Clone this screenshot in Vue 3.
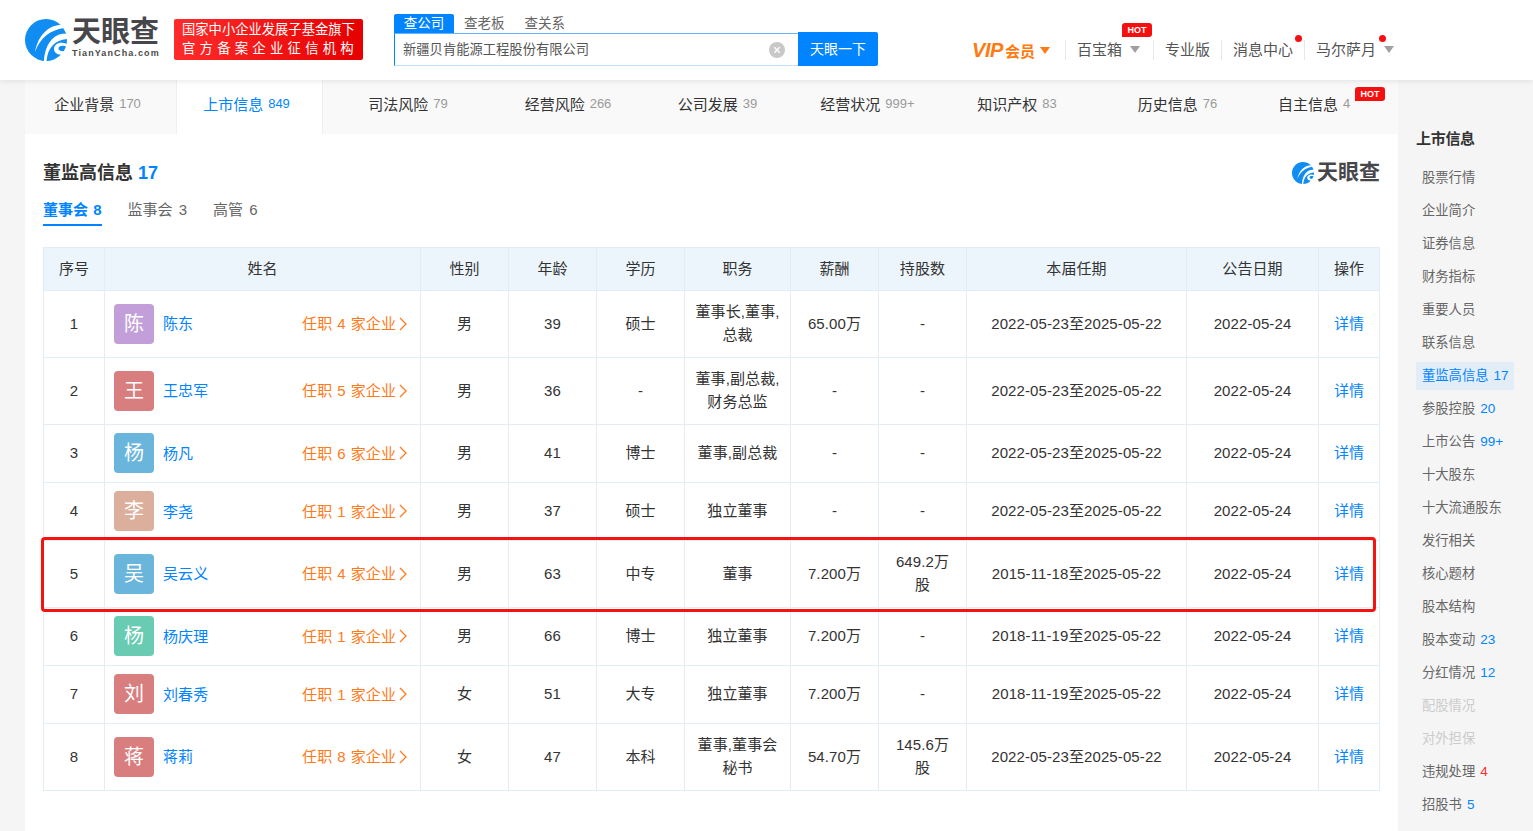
<script setup>
const mainTabs = [
  { name: '企业背景', count: '170' },
  { name: '上市信息', count: '849', active: true },
  { name: '司法风险', count: '79' },
  { name: '经营风险', count: '266' },
  { name: '公司发展', count: '39' },
  { name: '经营状况', count: '999+' },
  { name: '知识产权', count: '83' },
  { name: '历史信息', count: '76' },
  { name: '自主信息', count: '4', hot: true }
]

const people = [
  { no: 1, avatar: '陈', color: '#c39fd9', name: '陈东', jobs: 4, sex: '男', age: 39, edu: '硕士', post: ['董事长,董事,', '总裁'], pay: '65.00万', shares: ['-'], term: '2022-05-23至2025-05-22' },
  { no: 2, avatar: '王', color: '#d87e7e', name: '王忠军', jobs: 5, sex: '男', age: 36, edu: '-', post: ['董事,副总裁,', '财务总监'], pay: '-', shares: ['-'], term: '2022-05-23至2025-05-22' },
  { no: 3, avatar: '杨', color: '#69b5dc', name: '杨凡', jobs: 6, sex: '男', age: 41, edu: '博士', post: ['董事,副总裁'], pay: '-', shares: ['-'], term: '2022-05-23至2025-05-22' },
  { no: 4, avatar: '李', color: '#dcae9c', name: '李尧', jobs: 1, sex: '男', age: 37, edu: '硕士', post: ['独立董事'], pay: '-', shares: ['-'], term: '2022-05-23至2025-05-22' },
  { no: 5, avatar: '吴', color: '#69b5dc', name: '吴云义', jobs: 4, sex: '男', age: 63, edu: '中专', post: ['董事'], pay: '7.200万', shares: ['649.2万', '股'], term: '2015-11-18至2025-05-22' },
  { no: 6, avatar: '杨', color: '#69cbb2', name: '杨庆理', jobs: 1, sex: '男', age: 66, edu: '博士', post: ['独立董事'], pay: '7.200万', shares: ['-'], term: '2018-11-19至2025-05-22' },
  { no: 7, avatar: '刘', color: '#d87e7e', name: '刘春秀', jobs: 1, sex: '女', age: 51, edu: '大专', post: ['独立董事'], pay: '7.200万', shares: ['-'], term: '2018-11-19至2025-05-22' },
  { no: 8, avatar: '蒋', color: '#d87e7e', name: '蒋莉', jobs: 8, sex: '女', age: 47, edu: '本科', post: ['董事,董事会', '秘书'], pay: '54.70万', shares: ['145.6万', '股'], term: '2022-05-23至2025-05-22' }
]

const sideItems = [
  { name: '股票行情' },
  { name: '企业简介' },
  { name: '证券信息' },
  { name: '财务指标' },
  { name: '重要人员' },
  { name: '联系信息' },
  { name: '董监高信息', count: '17', active: true },
  { name: '参股控股', count: '20' },
  { name: '上市公告', count: '99+' },
  { name: '十大股东' },
  { name: '十大流通股东' },
  { name: '发行相关' },
  { name: '核心题材' },
  { name: '股本结构' },
  { name: '股本变动', count: '23' },
  { name: '分红情况', count: '12' },
  { name: '配股情况', off: true },
  { name: '对外担保', off: true },
  { name: '违规处理', count: '4', red: true },
  { name: '招股书', count: '5' }
]
</script>

<template>
  <div class="page">
    <header class="topbar">
      <div class="logo">
        <svg class="logo-mark" viewBox="0 0 42 42">
          <circle cx="21" cy="21" r="21" fill="#0f8df2" />
          <path d="M36 6C24 6 13 16 10 33 15 19 25 11 39 9z" fill="#fff" />
          <path d="M42 15C30 13 20 24 19 42h2.500C23 28 30 21 42 20z" fill="#fff" />
          <path d="M42 25c-7-3-13 0-13 5 0 4 5 7 10 5l1.500-3c-4 1-7-.5-7-2.500 0-2.500 4-3.500 8-2z" fill="#fff" />
        </svg>
        <div class="logo-text">
          <div class="logo-cn">天眼查</div>
          <div class="logo-en">TianYanCha.com</div>
        </div>
      </div>
      <div class="slogan">
        <div>国家中小企业发展子基金旗下</div>
        <div class="slogan-wide">官方备案企业征信机构</div>
      </div>
      <div class="search">
        <div class="search-tabs">
          <span class="search-tab on">查公司</span>
          <span class="search-tab">查老板</span>
          <span class="search-tab">查关系</span>
        </div>
        <div class="search-row">
          <div class="search-input">
            <span class="search-value">新疆贝肯能源工程股份有限公司</span>
            <svg class="search-clear" viewBox="0 0 16 16">
              <circle cx="8" cy="8" r="8" fill="#c8c8c8" />
              <path d="M5.300 5.300l5.400 5.400M10.700 5.300l-5.400 5.400" stroke="#fff" stroke-width="1.400" />
            </svg>
          </div>
          <div class="search-btn">天眼一下</div>
        </div>
      </div>
      <nav class="topnav">
        <div class="vip">
          <span class="vip-en">VIP</span><span class="vip-cn">会员</span>
          <i class="tri tri-orange"></i>
        </div>
        <div class="nav-item box">
          百宝箱<i class="tri"></i>
          <span class="hot hot-box">HOT</span>
        </div>
        <div class="nav-item pro">专业版</div>
        <div class="nav-item msg">消息中心<b class="dot"></b></div>
        <div class="nav-item user">马尔萨月<b class="dot"></b><i class="tri"></i></div>
      </nav>
    </header>

    <div class="body">
      <main class="content">
        <div class="main-tabs">
          <div v-for="tab in mainTabs" :key="tab.name" class="main-tab" :class="{ active: tab.active }">
            {{ tab.name }}<span class="main-count">{{ tab.count }}</span>
            <span v-if="tab.hot" class="hot hot-tab">HOT</span>
          </div>
        </div>

        <section class="panel">
          <div class="panel-head">
            <h2 class="panel-title">董监高信息 <span class="blue">17</span></h2>
            <div class="mini-logo">
              <svg class="mini-mark" viewBox="0 0 42 42">
                <circle cx="21" cy="21" r="21" fill="#0f8df2" />
                <path d="M36 6C24 6 13 16 10 33 15 19 25 11 39 9z" fill="#fff" />
                <path d="M42 15C30 13 20 24 19 42h2.500C23 28 30 21 42 20z" fill="#fff" />
                <path d="M42 25c-7-3-13 0-13 5 0 4 5 7 10 5l1.500-3c-4 1-7-.5-7-2.500 0-2.500 4-3.500 8-2z" fill="#fff" />
              </svg>
              <span class="mini-text">天眼查</span>
            </div>
          </div>
          <div class="sub-tabs">
            <span class="sub-tab on">董事会 8</span>
            <span class="sub-tab">监事会 3</span>
            <span class="sub-tab">高管 6</span>
          </div>

          <div class="table-wrap">
            <table class="staff">
              <colgroup>
                <col class="c-narrow" />
                <col class="c-name" />
                <col class="c-mid" />
                <col class="c-mid" />
                <col class="c-mid" />
                <col class="c-post" />
                <col class="c-mid" />
                <col class="c-mid" />
                <col class="c-term" />
                <col class="c-date" />
                <col class="c-narrow" />
              </colgroup>
              <thead>
                <tr>
                  <th>序号</th>
                  <th>姓名</th>
                  <th>性别</th>
                  <th>年龄</th>
                  <th>学历</th>
                  <th>职务</th>
                  <th>薪酬</th>
                  <th>持股数</th>
                  <th>本届任期</th>
                  <th>公告日期</th>
                  <th>操作</th>
                </tr>
              </thead>
              <tbody>
                <tr v-for="p in people" :key="p.no">
                  <td>{{ p.no }}</td>
                  <td class="name-cell">
                    <div class="person">
                      <div class="avatar" :style="{ background: p.color }">{{ p.avatar }}</div>
                      <span class="person-name">{{ p.name }}</span>
                      <span class="jobs">任职<em>{{ p.jobs }}</em>家企业
                        <svg class="chev" viewBox="0 0 8 14"><path d="M1 1l6 6-6 6" fill="none" stroke="#ff7a1a" stroke-width="1.300" /></svg>
                      </span>
                    </div>
                  </td>
                  <td>{{ p.sex }}</td>
                  <td>{{ p.age }}</td>
                  <td>{{ p.edu }}</td>
                  <td><div v-for="line in p.post" :key="line">{{ line }}</div></td>
                  <td>{{ p.pay }}</td>
                  <td><div v-for="line in p.shares" :key="line">{{ line }}</div></td>
                  <td>{{ p.term }}</td>
                  <td>2022-05-24</td>
                  <td class="blue">详情</td>
                </tr>
              </tbody>
            </table>
            <div class="mark-box"></div>
          </div>
        </section>
      </main>

      <aside class="side">
        <div class="side-title">上市信息</div>
        <div
          v-for="item in sideItems"
          :key="item.name"
          class="side-item"
          :class="{ active: item.active, off: item.off }"
        >
          {{ item.name }}<span v-if="item.count" class="side-count" :class="{ red: item.red }">{{ item.count }}</span>
        </div>
      </aside>
    </div>
  </div>
</template>

<style>
html, body {
  margin: 0;
  height: 100%;
  overflow: hidden;
  background: #f5f5f5;
}
</style>

<style scoped>
.page {
  height: 831px;
  overflow: hidden;
  font-family: "Liberation Sans", "Noto Sans CJK SC", sans-serif;
  color: #333;
}
.blue {
  color: #0084ff;
}

/* top bar */
.topbar {
  position: relative;
  z-index: 2;
  display: flex;
  height: 80px;
  background: #fff;
  box-shadow: 0 1px 6px rgba(0, 0, 0, 0.1);
}
.logo {
  display: flex;
  width: 149px;
  margin-left: 25px;
  padding-top: 19px;
  gap: 5px;
}
.logo-mark {
  width: 42px;
  height: 42px;
  flex: none;
}
.logo-cn {
  margin-top: -2px;
  font-size: 29px;
  line-height: 30px;
  font-weight: 700;
  color: #47474b;
}
.logo-en {
  margin-top: 1px;
  font-size: 9px;
  line-height: 10px;
  font-weight: 700;
  letter-spacing: 1.100px;
  color: #4a4a4a;
  white-space: nowrap;
}
.slogan {
  width: 189px;
  height: 41px;
  margin-top: 19px;
  box-sizing: border-box;
  padding: 1px 0 0 8px;
  border-radius: 2px;
  background: linear-gradient(90deg, #ff2b2b, #e60000);
  color: #fff;
  font-size: 13.300px;
  line-height: 19px;
  white-space: nowrap;
}
.slogan-wide {
  letter-spacing: 4.200px;
  font-size: 13.400px;
}
.search {
  width: 484px;
  margin: 14px 0 0 31px;
}
.search-tabs {
  display: flex;
  height: 19px;
  font-size: 13.500px;
  line-height: 19px;
  color: #666;
}
.search-tab {
  margin-right: 20px;
}
.search-tab.on {
  width: 60px;
  margin-right: 10px;
  background: #0084ff;
  color: #fff;
  text-align: center;
  border-radius: 2px 2px 0 0;
}
.search-row {
  display: flex;
  height: 33px;
}
.search-input {
  display: flex;
  align-items: center;
  justify-content: space-between;
  flex: 1;
  box-sizing: border-box;
  padding: 0 13px 0 8px;
  border: 1px solid #bfe0ff;
  border-top-color: #66b3ff;
  border-left-color: #0084ff;
  border-right: none;
  font-size: 13.300px;
  color: #555;
}
.search-value {
  margin-bottom: 3px;
}
.search-clear {
  width: 16px;
  height: 16px;
}
.search-btn {
  width: 80px;
  height: 34px;
  margin-top: -1px;
  border-radius: 0 2px 2px 0;
  background: #0084ff;
  color: #fff;
  font-size: 14px;
  line-height: 34px;
  text-align: center;
}
.topnav {
  display: flex;
  align-items: center;
  height: 20px;
  margin: 40px 0 0 95px;
  font-size: 15px;
  color: #555;
}
.vip {
  display: flex;
  align-items: center;
  width: 92px;
  box-sizing: border-box;
  color: #ff7a0f;
  font-weight: 700;
}
.vip-en {
  font-size: 20px;
  font-style: italic;
  letter-spacing: -0.400px;
  margin: 0 2px 0 -1px;
}
.vip-cn {
  font-size: 15px;
}
.tri {
  display: inline-block;
  width: 0;
  height: 0;
  margin-left: 8px;
  border: 5px solid transparent;
  border-top: 7px solid #a0a0a0;
  border-bottom: none;
}
.tri-orange {
  margin-left: 5px;
  border-top-color: #ff7a0f;
}
.nav-item {
  position: relative;
  height: 20px;
  line-height: 20px;
  padding-left: 11px;
  border-left: 1px solid #e8e8e8;
  white-space: nowrap;
}
.nav-item .tri {
  vertical-align: 2px;
}
.box {
  width: 76px;
}
.pro {
  width: 56px;
}
.msg {
  width: 71px;
}
.user .tri {
  margin-left: 8px;
}
.dot {
  position: absolute;
  top: -5px;
  width: 7px;
  height: 7px;
  border-radius: 50%;
  background: #f60f0f;
}
.msg .dot {
  left: 73px;
}
.user .dot {
  left: 74px;
}
.hot {
  position: absolute;
  width: 30px;
  height: 14px;
  border-radius: 3px 3px 3px 0;
  background: #f60f0f;
  color: #fff;
  font-size: 9px;
  font-weight: 700;
  line-height: 14px;
  text-align: center;
}
.hot-box {
  top: -17px;
  left: 56px;
}
.hot-tab {
  top: 7px;
  left: 91px;
}

/* body */
.body {
  display: flex;
  padding-left: 25px;
}
.content {
  width: 1373px;
  height: 751px;
  background: #fff;
}
.main-tabs {
  display: grid;
  grid-template-columns: 151px 147px 170px 150px 149px 151px 148px 173px 100px;
  height: 54px;
  background: #f9f9f9;
}
.main-tab {
  position: relative;
  display: flex;
  align-items: center;
  justify-content: center;
  box-sizing: border-box;
  padding-bottom: 8px;
  font-size: 15px;
  color: #333;
  white-space: nowrap;
}
.main-tab:nth-child(-n+2) {
  padding-right: 6px;
}
.main-tab.active {
  background: #fff;
  color: #0084ff;
  border-left: 1px solid #f0f0f0;
  border-right: 1px solid #f0f0f0;
}
.main-count {
  margin-left: 5px;
  font-size: 13px;
  color: #999;
}
.main-tab.active .main-count {
  color: #0084ff;
}
.panel {
  padding: 27px 18px 0;
}
.panel-head {
  display: flex;
  justify-content: space-between;
  align-items: center;
  height: 24px;
}
.panel-title {
  margin: 0;
  font-size: 18px;
  line-height: 24px;
  font-weight: 700;
  color: #333;
}
.mini-logo {
  display: flex;
  align-items: center;
  gap: 3px;
  font-size: 21px;
  font-weight: 700;
  color: #47474b;
}
.mini-mark {
  width: 22px;
  height: 22px;
  margin-top: -1px;
}
.mini-text {
  margin-top: -6px;
}
.sub-tabs {
  display: flex;
  gap: 26px;
  height: 42px;
  margin-top: 13px;
  box-sizing: border-box;
}
.sub-tab {
  height: 28px;
  box-sizing: border-box;
  font-size: 15px;
  line-height: 24px;
  word-spacing: 2px;
  color: #666;
}
.sub-tab.on {
  color: #0084ff;
  font-weight: 700;
  word-spacing: 1px;
  border-bottom: 2px solid #0084ff;
}

/* table */
.table-wrap {
  position: relative;
  margin-top: 7px;
}
.staff {
  width: 1337px;
  table-layout: fixed;
  border-collapse: collapse;
  font-size: 15px;
  line-height: 23px;
  letter-spacing: 0.100px;
  color: #333;
}
.c-narrow {
  width: 61px;
}
.c-name {
  width: 316px;
}
.c-mid {
  width: 88px;
}
.c-post {
  width: 106px;
}
.c-term {
  width: 220px;
}
.c-date {
  width: 132px;
}
.staff th,
.staff td {
  padding: 9px 10px 11px;
  border: 1px solid #e3edf5;
  text-align: center;
  font-weight: 400;
}
.staff th {
  height: 23px;
  padding: 9px 10px 10px;
  background: #ecf5fc;
}
.staff .name-cell {
  padding: 8px 10px 9px 9px;
}
.person {
  display: flex;
  align-items: center;
}
.avatar {
  width: 40px;
  height: 40px;
  flex: none;
  border-radius: 4px;
  color: #fff;
  font-size: 20px;
  line-height: 40px;
  text-align: center;
}
.person-name {
  margin-left: 9px;
  color: #0084ff;
}
.jobs {
  display: flex;
  align-items: center;
  margin-left: auto;
  margin-right: 3px;
  color: #ff7a1a;
}
.jobs em {
  margin: 0 5px;
  font-style: normal;
}
.chev {
  width: 8px;
  height: 14px;
  margin-left: 3px;
}
.mark-box {
  position: absolute;
  top: 290px;
  left: -2px;
  width: 1335px;
  height: 75px;
  box-sizing: border-box;
  border: 3px solid #f5120f;
  border-radius: 4px;
  pointer-events: none;
}

/* right nav */
.side {
  flex: none;
  width: 135px;
  padding-top: 47px;
  box-sizing: border-box;
}
.side-title {
  height: 24px;
  margin: 0 0 13px 18px;
  font-size: 15px;
  font-weight: 700;
  line-height: 24px;
  color: #333;
  letter-spacing: -0.300px;
}
.side-item {
  width: 98px;
  height: 28px;
  margin: 0 0 5px 18px;
  padding-left: 6px;
  box-sizing: border-box;
  border-radius: 2px;
  font-size: 13.300px;
  line-height: 28px;
  color: #666;
  white-space: nowrap;
}
.side-item.active {
  background: #e3edf8;
  color: #0084ff;
}
.side-item.off {
  color: #ccc;
}
.side-count {
  margin-left: 5px;
  font-size: 13.500px;
  line-height: 1;
  color: #0084ff;
}
.side-count.red {
  color: #f5302a;
}
</style>
